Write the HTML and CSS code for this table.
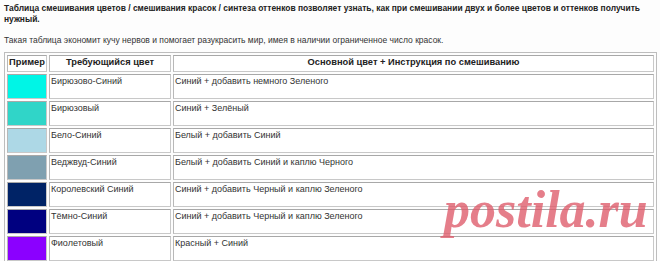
FILE: index.html
```html
<!DOCTYPE html>
<html lang="ru">
<head>
<meta charset="utf-8">
<link rel="stylesheet" href="styles.css">
</head>
<body>
<div class="page">
  <p class="lead">Таблица смешивания цветов / смешивания красок / синтеза оттенков позволяет узнать, как при смешивании двух и более цветов и оттенков получить нужный.</p>
  <p class="note">Такая таблица экономит кучу нервов и помогает разукрасить мир, имея в наличии ограниченное число красок.</p>
  <table class="mix">
    <colgroup><col class="c1"><col class="c2"><col class="c3"></colgroup>
    <thead>
      <tr><th>Пример</th><th>Требующийся цвет</th><th>Основной цвет + Инструкция по смешиванию</th></tr>
    </thead>
    <tbody>
      <tr><td class="sw sw-1"></td><td>Бирюзово-Синий</td><td>Синий + добавить немного Зеленого</td></tr>
      <tr><td class="sw sw-2"></td><td>Бирюзовый</td><td>Синий + Зелёный</td></tr>
      <tr><td class="sw sw-3"></td><td>Бело-Синий</td><td>Белый + добавить Синий</td></tr>
      <tr><td class="sw sw-4"></td><td>Веджвуд-Синий</td><td>Белый + добавить Синий и каплю Черного</td></tr>
      <tr><td class="sw sw-5"></td><td>Королевский Синий</td><td>Синий + добавить Черный и каплю Зеленого</td></tr>
      <tr><td class="sw sw-6"></td><td>Тёмно-Синий</td><td>Синий + добавить Черный и каплю Зеленого</td></tr>
      <tr><td class="sw sw-7"></td><td>Фиолетовый</td><td>Красный + Синий</td></tr>
    </tbody>
  </table>
  <div class="watermark">postila.ru</div>
</div>
</body>
</html>
```
FILE: styles.css
```css
html, body {
  margin: 0;
  padding: 0;
  background: #fdfdfd;
}
.page {
  position: relative;
  padding: 3px 4px 0 4px;
  font-family: "Liberation Sans", Arial, sans-serif;
  color: #222;
  height: 258px;
  overflow: hidden;
}
.lead {
  margin: 0;
  font-size: 8.45px;
  font-weight: bold;
  line-height: 11px;
}
.note {
  margin: 10px 0 0 0;
  font-size: 8.5px;
  line-height: 11px;
  color: #333;
}
.mix {
  margin-top: 6px;
  width: 653px;
  table-layout: fixed;
  border: 1px solid #bdbdbd;
  border-spacing: 2px;
  font-size: 9px;
  color: #333;
}
.c1 { width: 40px; }
.c2 { width: 122px; }
.mix th, .mix td {
  border: 1px solid #c8c8c8;
  border-top-color: #a8a8a8;
  border-left-color: #b8b8b8;
  background: #fff;
  padding: 1px 1px;
  vertical-align: top;
  text-align: left;
  white-space: nowrap;
  overflow: hidden;
}
.mix th {
  font-weight: bold;
  font-size: 9.3px;
  text-align: center;
  height: 13px;
  color: #222;
}
.mix td {
  height: 21px;
}
.mix td.sw { padding: 0; }
.sw-1 { background: #00f5e6 !important; }
.sw-2 { background: #30d5c8 !important; }
.sw-3 { background: #add8e6 !important; }
.sw-4 { background: #7fa0b0 !important; }
.sw-5 { background: #002366 !important; }
.sw-6 { background: #000080 !important; }
.sw-7 { background: #8b00ff !important; }
.watermark {
  position: absolute;
  left: 444px;
  top: 180px;
  font-family: "Liberation Serif", "Times New Roman", serif;
  font-weight: bold;
  font-style: italic;
  font-size: 52px;
  line-height: 60px;
  color: rgba(222, 90, 105, 0.78);
}
```
